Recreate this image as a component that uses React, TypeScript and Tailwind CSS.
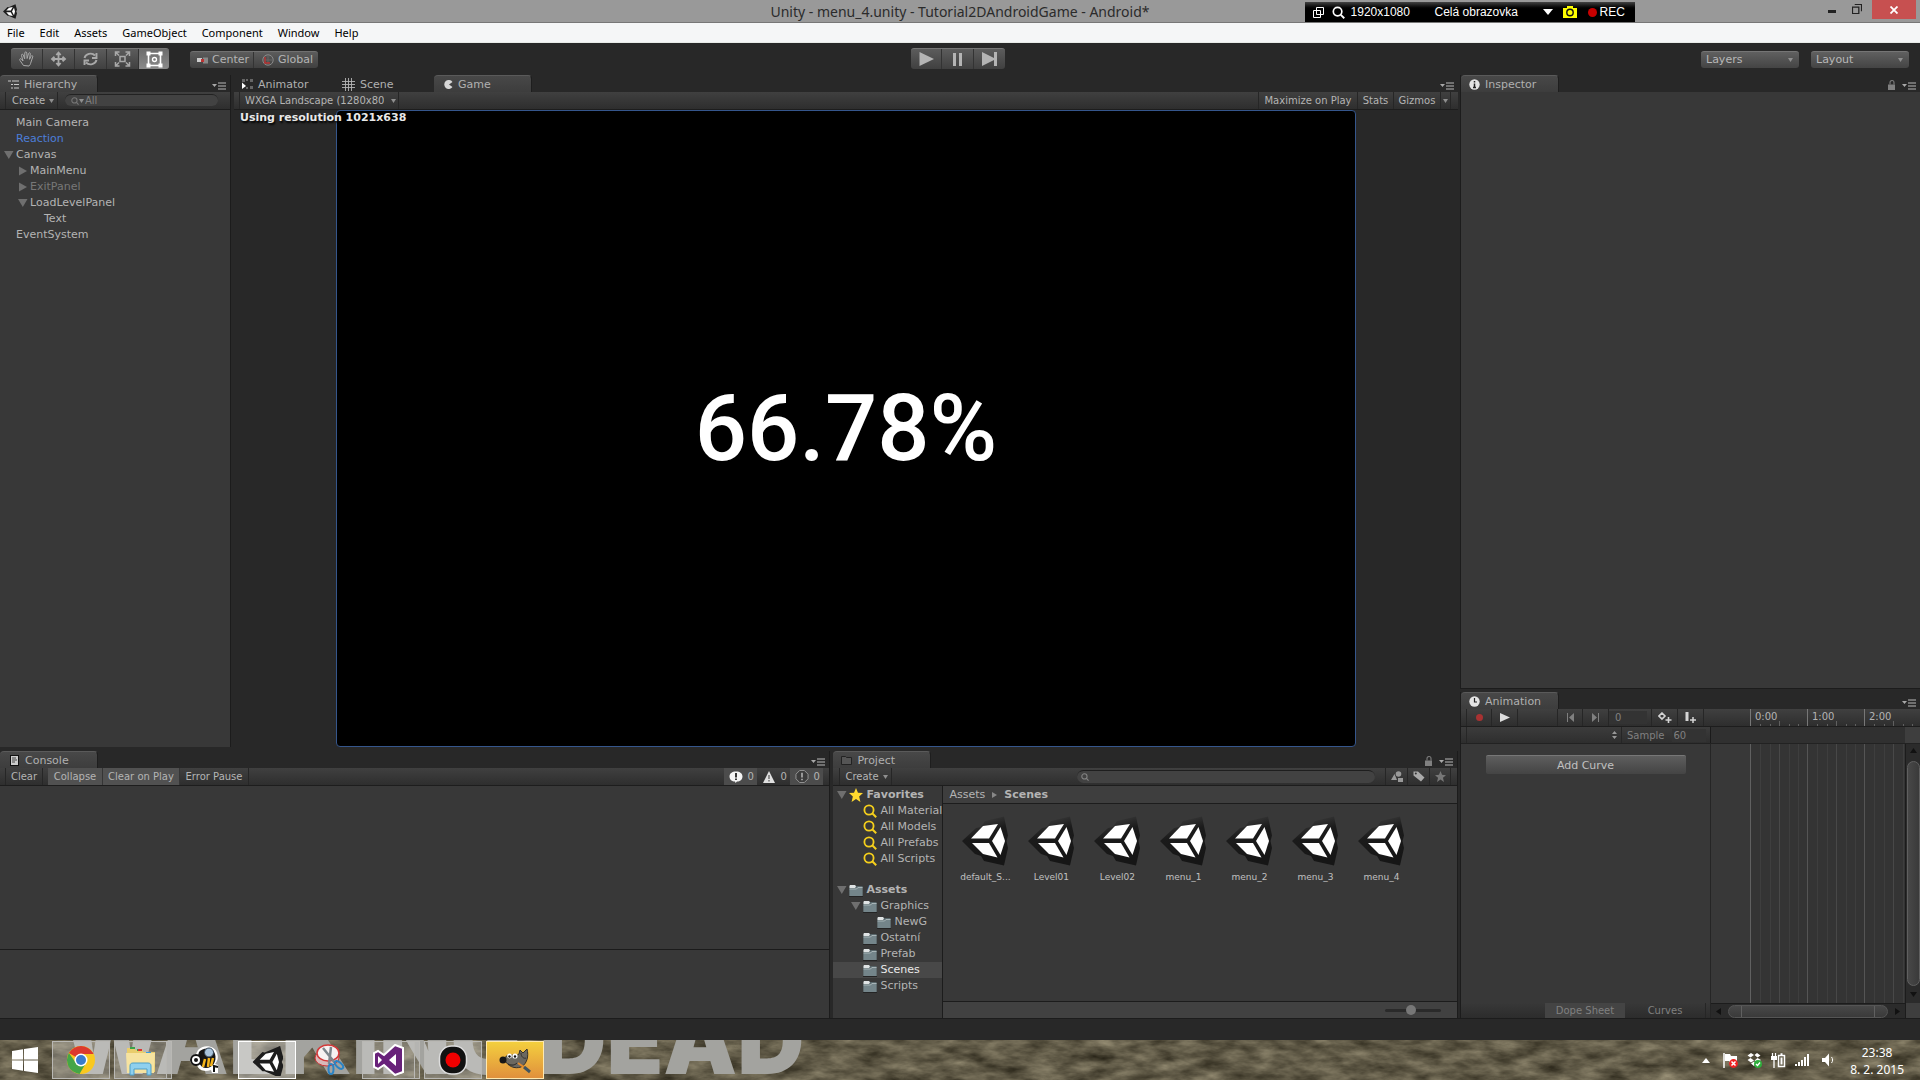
/**
 * Unity editor workspace — menu bar, tool bar, docked panels and the desktop taskbar.
 */

import type { ReactNode } from 'react'

const MENUS = ['File', 'Edit', 'Assets', 'GameObject', 'Component', 'Window', 'Help']

interface TreeItem {
  label: string
  indent: string
  arrow?: 'open' | 'closed'
  tone?: string
}

const HIERARCHY: TreeItem[] = [
  { label: 'Main Camera', indent: 'pl-1' },
  { label: 'Reaction', indent: 'pl-1', tone: 'text-[#4c7ed9]' },
  { label: 'Canvas', indent: 'pl-1', arrow: 'open' },
  { label: 'MainMenu', indent: 'pl-[18px]', arrow: 'closed' },
  { label: 'ExitPanel', indent: 'pl-[18px]', arrow: 'closed', tone: 'text-[#777]' },
  { label: 'LoadLevelPanel', indent: 'pl-[18px]', arrow: 'open' },
  { label: 'Text', indent: 'pl-8' },
  { label: 'EventSystem', indent: 'pl-1' },
]

const FAVORITES = ['All Materials', 'All Models', 'All Prefabs', 'All Scripts']

const FOLDERS: TreeItem[] = [
  { label: 'Graphics', indent: 'pl-[18px]', arrow: 'open' },
  { label: 'NewG', indent: 'pl-8' },
  { label: 'Ostatní', indent: 'pl-[18px]' },
  { label: 'Prefab', indent: 'pl-[18px]' },
  { label: 'Scenes', indent: 'pl-[18px]' },
  { label: 'Scripts', indent: 'pl-[18px]' },
]

const SCENES = ['default_S...', 'Level01', 'Level02', 'menu_1', 'menu_2', 'menu_3', 'menu_4']

/* ---------- small icons ---------- */

function Arrow({ state }: { state?: 'open' | 'closed' }) {
  return (
    <svg className="mr-[2px] h-[10px] w-[10px] shrink-0" viewBox="0 0 10 10" fill="#6f6f6f">
      {state === 'open' && <path d="M0 1h9.500L4.800 9z" />}
      {state === 'closed' && <path d="M1 0.500v9L9 5z" />}
    </svg>
  )
}

function Caret({ className = '' }: { className?: string }) {
  return (
    <svg className={`h-[4px] w-[5px] shrink-0 ${className}`} viewBox="0 0 5 4" fill="#8f8f8f">
      <path d="M0 0h5L2.500 4z" />
    </svg>
  )
}

function PaneMenu() {
  return (
    <button aria-label="Panel menu" className="mb-[1px] flex h-[10px] items-center">
      <svg className="h-[8px] w-[14px]" viewBox="0 0 14 8">
        <path d="M0 2h5L2.500 5z" fill="#a8a8a8" />
        <path d="M6 1h8M6 4h8M6 7h8" stroke="#b8b8b8" strokeWidth="1.200" />
      </svg>
    </button>
  )
}

function Lock() {
  return (
    <button aria-label="Lock panel" className="mb-[2px]">
      <svg className="h-[10px] w-[9px]" viewBox="0 0 9 10">
        <path d="M3 4.500V2.500a2 2 0 0 1 4 0v2" fill="none" stroke="#777" strokeWidth="1.200" />
        <path d="M1 4.500h7V10H1z" fill="#808080" />
      </svg>
    </button>
  )
}

function Magnifier({ className }: { className: string }) {
  return (
    <svg className={className} viewBox="0 0 14 14" fill="none" stroke="currentColor">
      <circle cx="6" cy="6" r="4.600" strokeWidth="1.800" />
      <path d="M9.500 9.500L13.200 13.200" strokeWidth="2" />
    </svg>
  )
}

function Folder() {
  return (
    <svg className="h-[13px] w-[14px] shrink-0" viewBox="0 0 14 13">
      <path d="M0.500 12V2L1.500 1H6l1 1h6.500v10z" fill="#58666a" />
      <path d="M1 1h5l1 1.500L6 4H0.500V2z" fill="#dfe3e4" />
      <path d="M0.500 4.500H7l1.500-1.500h5V12h-13z" fill="#74858a" />
      <path d="M0.500 5H7.500L9 3.500h4.500" fill="none" stroke="#b5c0c3" strokeWidth="0.800" />
      <path d="M0 12.500h14" stroke="#242424" />
    </svg>
  )
}

function SceneIcon({ className }: { className: string }) {
  return (
    <svg className={className} viewBox="0 0 47 50">
      <defs>
        <linearGradient id="sceneShell" x1="0" y1="0" x2="0.300" y2="1">
          <stop offset="0" stopColor="#4a4a4a" />
          <stop offset="0.450" stopColor="#1b1b1b" />
          <stop offset="1" stopColor="#161616" />
        </linearGradient>
      </defs>
      <path d="M0 25L14 12l5 -1 4 -6L42 0.500l4 19 -1.500 5.500 1.500 7 -4 17.500L22 45l-3 -5 -6 -2z" fill="url(#sceneShell)" />
      <path d="M9 22.500L21 10l15 -2 -9 14.500z" fill="#fff" />
      <path d="M10 27h17l8.500 14.500L21 38z" fill="#fff" />
      <path d="M38.500 11L43 25l-4.500 14L30 25z" fill="#fff" />
    </svg>
  )
}

function UnityMark({ className }: { className: string }) {
  return (
    <svg className={className} viewBox="0 0 28 29">
      <path d="M0 14.500L9 5.500 11 6 25 0l3 11 -1.500 3.500L28 18l-3 11 -14 -6H9z" fill="#1d1d1d" />
      <path d="M6.500 12.500L12 7l7.500 -1.500 -4 7zM6.500 16h9l4 7.500L12 22zM22 7l2 7.500 -2 7.500 -4 -7.500z" fill="#fff" />
    </svg>
  )
}

/* ---------- panel pieces ---------- */

function Tab({ icon, children, active = true }: { icon: ReactNode; children: ReactNode; active?: boolean }) {
  const look = active
    ? 'w-[98px] rounded-t-[4px] border-t border-r border-[#5a5a5a] border-r-[#1e1e1e] bg-linear-to-b from-[#484848] to-[#3d3d3d]'
    : 'w-[100px] pt-px'
  return (
    <button role="tab" aria-selected={active} className={`flex h-[17px] shrink-0 items-center gap-[5px] pl-2 text-[11px] leading-[16px] text-[#b0b0b0] ${look}`}>
      {icon}
      <span className="pt-px whitespace-nowrap">{children}</span>
    </button>
  )
}

function TabBar({ children, lock = false }: { children: ReactNode; lock?: boolean }) {
  return (
    <div className="flex h-[17px] shrink-0 items-end">
      {children}
      <div className="ml-auto flex items-end gap-[6px] pr-1">
        {lock && <Lock />}
        <PaneMenu />
      </div>
    </div>
  )
}

function Strip({ children }: { children: ReactNode }) {
  return (
    <div className="flex h-[18px] shrink-0 items-stretch border-b border-[#1d1d1d] bg-linear-to-b from-[#404040] to-[#2e2e2e] text-[10px] text-[#b4b4b4]">
      {children}
    </div>
  )
}

function DropDown({ label, options }: { label: string; options: string[] }) {
  return (
    <span className="relative flex w-[98px]">
      <select
        aria-label={label}
        className="h-[17px] w-full appearance-none rounded-[3px] border-t border-[#757575] bg-linear-to-b from-[#606060] to-[#444] pl-[5px] text-[11px] leading-[14px] text-[#b8b8b8]"
      >
        {options.map((o) => (
          <option key={o}>{o}</option>
        ))}
      </select>
      <Caret className="pointer-events-none absolute top-[7px] right-[6px]" />
    </span>
  )
}

/* ---------- top of the window ---------- */

function TitleBar() {
  return (
    <header className="grid h-[23px] shrink-0 grid-cols-[1fr_auto_1fr] border-b border-[#777] bg-[#999] font-['Noto_Sans',sans-serif]">
      <div className="flex items-center pl-[3px]">
        <UnityMark className="h-[15px] w-[14px]" />
      </div>
      <h1 className="text-[14px] leading-[23px] text-[#2b2b2b]">Unity - menu_4.unity - Tutorial2DAndroidGame - Android*</h1>
      <div className="flex items-start justify-end gap-[10px] pr-1">
        <div className="mt-[2px] mr-auto ml-[155px] flex h-5 w-[330px] items-center bg-linear-to-b from-[#444] to-black to-40% pl-2 font-['Liberation_Sans',sans-serif] text-[12px] text-white">
          <svg className="h-[11px] w-[11px]" viewBox="0 0 11 11" fill="none" stroke="#fff">
            <path d="M3.500 0.500h7v7h-7zM0.500 3.500h7v7h-7z" />
          </svg>
          <Magnifier className="ml-2 h-[13px] w-[13px]" />
          <span className="ml-[6px] w-[84px]">1920x1080</span>
          <span className="w-[108px]">Celá obrazovka</span>
          <svg className="h-[6px] w-[10px]" viewBox="0 0 10 6" fill="#fff">
            <path d="M0 0h10L5 6z" />
          </svg>
          <svg className="ml-[10px] h-[12px] w-[14px]" viewBox="0 0 14 12">
            <path d="M0 2h4V0h6v2h4v10H0z" fill="#ff0" />
            <circle cx="7" cy="6.500" r="3.200" fill="none" stroke="#111" strokeWidth="1.400" />
          </svg>
          <span className="ml-[11px] h-[9px] w-[9px] rounded-full bg-[#c80000]" />
          <span className="ml-[3px]">REC</span>
        </div>
        <button aria-label="Minimize" className="mt-[10px] mr-[6px] h-[3px] w-[8px] bg-[#222]" />
        <button aria-label="Restore" className="mt-[4px]">
          <svg className="h-[10px] w-[10px]" viewBox="0 0 11 11" fill="none" stroke="#222">
            <path d="M0.500 3.500h7v7h-7zM3 0.500h7.500V8" strokeWidth="1.400" />
          </svg>
        </button>
        <button aria-label="Close" className="flex h-[19px] w-[44px] items-center justify-center bg-[#c75050]">
          <svg className="h-[8px] w-[8px]" viewBox="0 0 8 8" stroke="#fff" strokeWidth="1.800">
            <path d="M0.500 0.500l7 7M7.500 0.500l-7 7" />
          </svg>
        </button>
      </div>
    </header>
  )
}

function MenuBar() {
  return (
    <nav className="flex h-5 shrink-0 items-center gap-[15px] border-b border-[#e8ebe8] bg-[#f5f6f7] pt-px pl-[7px] font-['Noto_Sans',sans-serif] text-[11px] text-black">
      {MENUS.map((m) => (
        <button key={m}>{m}</button>
      ))}
    </nav>
  )
}

const TOOLS: { label: string; art: ReactNode }[] = [
  {
    label: 'Hand',
    art: <path d="M5 14.500L1.500 9.500C0.500 8 2 7 3 8.200L4.500 10 3 4.500C2.700 3 4.300 2.600 4.800 4l1.400 3.800L6.300 2c0-1.500 1.900-1.500 2 0l0.300 5.500L10 2.600c0.400-1.400 2-1 1.800 0.400L11 8.300l1.500-3c0.700-1.300 2.200-0.600 1.700 0.700L12.500 11c-0.500 2-1 3-2 4z" strokeWidth="1" />,
  },
  {
    label: 'Move',
    art: <path d="M8 2v12M2 8h12M5.800 4L8 1.500 10.200 4M5.800 12L8 14.500 10.200 12M4 5.800L1.500 8 4 10.200M12 5.800L14.500 8 12 10.200" strokeWidth="1.800" />,
  },
  {
    label: 'Rotate',
    art: <path d="M2 7C3 3 9 1 12.500 4.500M14 2v5H9.500M14 9c-1 4-7 6-10.500 2.500M2 14V9.500h4.500" strokeWidth="1.900" />,
  },
  {
    label: 'Scale',
    art: <path d="M5.500 5.500h5v5h-5zM1 5V1h4M11 1h4v4M15 11v4h-4M5 15H1v-4M1 1l3.500 3.500M15 1l-3.500 3.500M15 15l-3.500-3.500M1 15l3.500-3.500" strokeWidth="1.500" />,
  },
]

function ToolBar() {
  return (
    <div className="grid h-8 shrink-0 grid-cols-[1fr_auto_1fr] items-start px-[11px] pt-[5px] text-[#b4b4b4]">
      <div className="flex items-center">
        <div className="flex h-[21px] rounded-[3px] border-t border-[#777] bg-linear-to-b from-[#5c5c5c] to-[#404040]">
          {TOOLS.map((t) => (
            <button key={t.label} aria-label={t.label} className="flex w-8 items-center justify-center border-r border-[#333]">
              <svg className="h-4 w-[17px]" viewBox="0 0 16 16" fill="none" stroke="#a9a9a9">
                {t.art}
              </svg>
            </button>
          ))}
          <button aria-label="Rect" aria-pressed="true" className="flex w-[30px] items-center justify-center rounded-r-[3px] bg-linear-to-b from-[#6c6c6c] to-[#8a8a8a]">
            <svg className="h-[17px] w-[17px]" viewBox="0 0 17 17" fill="none" stroke="#fff">
              <path d="M2.500 2.500h12v12h-12z" strokeWidth="1.600" />
              <circle cx="8.500" cy="8.500" r="2" strokeWidth="1.400" />
              <path d="M0.500 2.500h4M12.500 2.500h4M0.500 14.500h4M12.500 14.500h4" strokeWidth="4" />
            </svg>
          </button>
        </div>
        <div className="mt-[2px] ml-[21px] flex h-[17px] rounded-[3px] border-t border-[#707070] bg-linear-to-b from-[#5c5c5c] to-[#404040] text-[11px] leading-[16px]">
          <button className="flex w-16 items-center gap-1 border-r border-[#333] pl-[7px]">
            <svg className="h-[7px] w-[11px] shrink-0" viewBox="0 0 11 7">
              <path d="M0 1h5v4H0z" fill="#ccc" />
              <path d="M6 0.500h5v6H6z" fill="#888" />
              <path d="M4 2h3v3H4z" fill="#b33" />
            </svg>
            Center
          </button>
          <button className="flex w-16 items-center gap-1 pl-2">
            <svg className="h-[12px] w-[12px] shrink-0" viewBox="0 0 12 12" fill="none">
              <circle cx="6" cy="6" r="5.200" stroke="#8a8a8a" />
              <path d="M6 1v10M1 6h10" stroke="#666" />
              <path d="M3 3v6h5" stroke="#b33" strokeWidth="1.400" />
            </svg>
            Global
          </button>
        </div>
      </div>
      <div className="mr-1 flex h-[21px] rounded-[3px] border-t border-[#777] bg-linear-to-b from-[#5c5c5c] to-[#404040]">
        <button aria-label="Play" className="flex w-[31px] items-center justify-center border-r border-[#333]">
          <svg className="h-[14px] w-[15px]" viewBox="0 0 15 14" fill="#b4b4b4"><path d="M0.500 0v14L15 7z" /></svg>
        </button>
        <button aria-label="Pause" className="flex w-8 items-center justify-center border-r border-[#333]">
          <svg className="h-[13px] w-[9px]" viewBox="0 0 9 13" fill="#b4b4b4"><path d="M0 0h3v13H0zM6 0h3v13H6z" /></svg>
        </button>
        <button aria-label="Step" className="flex w-[31px] items-center justify-center">
          <svg className="h-[14px] w-[15px]" viewBox="0 0 15 14" fill="#b4b4b4"><path d="M0 0l12 6V0h3v14h-3V8L0 14z" /></svg>
        </button>
      </div>
      <div className="mt-[3px] flex justify-end gap-3">
        <DropDown label="Layers" options={['Layers']} />
        <DropDown label="Layout" options={['Layout']} />
      </div>
    </div>
  )
}

/* ---------- docked panels ---------- */

function HierarchyPanel() {
  return (
    <section className="flex w-[231px] shrink-0 flex-col border-r border-[#1c1c1c]">
      <TabBar>
        <Tab icon={
          <svg className="h-[9px] w-[11px]" viewBox="0 0 11 9" stroke="#c8c8c8"><path d="M0 1h3M4 1h7M3 4.500h2M6 4.500h5M3 8h2M6 8h5" /></svg>
        }>Hierarchy</Tab>
      </TabBar>
      <Strip>
        <button className="ml-[5px] flex w-[53px] items-center justify-between border-x border-[#262626] pr-[3px] pl-[6px]">
          Create <Caret />
        </button>
        <label className="mt-[2px] ml-[7px] flex h-[12px] w-[153px] items-center rounded-full border-t border-[#222] bg-[#424242] pl-[6px] text-[#777]">
          <Magnifier className="h-[8px] w-[8px]" />
          <Caret />
          <input aria-label="Search hierarchy" placeholder="All" className="min-w-0 flex-1 bg-transparent pl-[1px] text-[10px] leading-[12px] outline-none placeholder:text-[#808080]" />
        </label>
      </Strip>
      <ul role="tree" className="flex-1 bg-[#383838] pt-[5px] text-[11px]">
        {HIERARCHY.map((item) => (
          <li key={item.label} role="treeitem" className={`flex h-4 items-center ${item.indent} ${item.tone ?? 'text-[#b4b4b4]'}`}>
            <Arrow state={item.arrow} />
            {item.label}
          </li>
        ))}
      </ul>
    </section>
  )
}

function GamePanel() {
  return (
    <section className="flex min-w-0 flex-1 flex-col">
      <TabBar>
        <Tab active={false} icon={
          <svg className="h-[10px] w-[11px]" viewBox="0 0 11 10">
            <path d="M0 0h3v3H0zM4 0h2v2H4zM8 0h3v3H8zM8 7h3v3H8zM4 8h2v2H4z" fill="#666" />
            <path d="M0 3.500v6.500L4 7z" fill="#fff" />
          </svg>
        }>Animator</Tab>
        <Tab active={false} icon={
          <svg className="h-[13px] w-[13px]" viewBox="0 0 13 13" stroke="#b4b4b4"><path d="M3.500 0v13M6.500 0v13M9.500 0v13M0 3.500h13M0 6.500h13M0 9.500h13" strokeWidth="0.900" /></svg>
        }>Scene</Tab>
        <Tab icon={
          <svg className="ml-[2px] h-[9px] w-[9px]" viewBox="0 0 9 9"><path d="M8.500 2A4.500 4.500 0 1 0 8.500 7L5 4.500z" fill="#d8d8d8" /></svg>
        }>Game</Tab>
      </TabBar>
      <Strip>
        <span className="relative ml-[5px] flex w-[160px] border-x border-[#262626]">
          <select aria-label="Aspect" className="w-full appearance-none overflow-hidden bg-transparent pr-[14px] pl-[5px] text-[10px] leading-4">
            <option>WXGA Landscape (1280x800)</option>
          </select>
          <Caret className="pointer-events-none absolute top-[7px] right-[2px]" />
        </span>
        <div className="mr-[7px] ml-auto flex">
          <button className="w-[99px] border-l border-[#262626]">Maximize on Play</button>
          <button className="w-[36px] border-l border-[#262626]">Stats</button>
          <button className="w-[47px] border-l border-[#262626]">Gizmos</button>
          <button aria-label="Gizmo options" className="flex w-[11px] items-center justify-center border-x border-[#262626]"><Caret /></button>
        </div>
      </Strip>
      <div className="relative flex min-h-0 flex-1 justify-center bg-[#282828]">
        <div className="flex aspect-[1021/638] h-full items-center justify-center rounded-[4px] border border-[#35568c] bg-black">
          <p className="font-['Roboto',sans-serif] text-[92px] leading-none font-medium text-white">66.78%</p>
        </div>
        <p className="absolute top-0 left-[6px] text-[11px] leading-4 font-bold text-[#e8e8e8] text-shadow-[1px_2px_2px_#000]">Using resolution 1021x638</p>
      </div>
    </section>
  )
}

function ConsolePanel() {
  return (
    <section className="flex min-w-0 flex-[830] flex-col border-r border-[#1c1c1c]">
      <TabBar>
        <Tab icon={
          <svg className="mr-px ml-[2px] h-[11px] w-[9px]" viewBox="0 0 9 11">
            <path d="M0 0h9v11H0z" fill="#111" />
            <path d="M1 1h7v9H1z" fill="#ccc" />
            <path d="M2 3h4M2 5h5M2 7h3" stroke="#444" />
          </svg>
        }>Console</Tab>
      </TabBar>
      <Strip>
        <button className="ml-[5px] w-[38px] border-x border-[#262626]">Clear</button>
        <button aria-pressed="true" className="ml-[5px] w-[54px] bg-[#515151]">Collapse</button>
        <button aria-pressed="true" className="w-[78px] border-x border-[#353535] bg-[#515151]">Clear on Play</button>
        <button className="w-[69px] border-r border-[#262626]">Error Pause</button>
        <div className="mr-[6px] ml-auto flex">
          <button aria-label="Messages" className="flex w-[33px] items-center gap-1 bg-[#4c4c4c] pl-[5px]">
            <svg className="h-[12px] w-[14px]" viewBox="0 0 14 12">
              <path d="M7 0.500c4 0 6.500 2 6.500 5S11 10.500 8 10.500L6.500 12 6 10.500C3 10.500 0.500 8.500 0.500 5.500S3 0.500 7 0.500z" fill="#f4f4f4" />
              <path d="M7 2v4.500M7 7.500v1.500" stroke="#222" strokeWidth="1.800" />
            </svg>
            0
          </button>
          <button aria-label="Warnings" className="flex w-[33px] items-center gap-[5px] pl-[6px]">
            <svg className="h-[12px] w-[12px]" viewBox="0 0 12 12">
              <path d="M6 0l6 12H0z" fill="#e0e0e0" />
              <path d="M6 4v4M6 9v1.500" stroke="#555" strokeWidth="1.200" />
            </svg>
            0
          </button>
          <button aria-label="Errors" className="flex w-[33px] items-center gap-1 bg-[#4c4c4c] pl-[5px]">
            <svg className="h-[13px] w-[14px]" viewBox="0 0 14 14">
              <path d="M4.500 0.500h5l4 4v5l-4 4h-5l-4-4v-5z" fill="#3c3c3c" stroke="#999" />
              <path d="M7 3v5M7 9.500V11" stroke="#b8b8b8" strokeWidth="1.600" />
            </svg>
            0
          </button>
        </div>
      </Strip>
      <div className="min-h-0 flex-1 border-b border-[#1b1b1b] bg-[#383838]" />
      <div className="h-[68px] shrink-0 bg-[#383838]" />
    </section>
  )
}

function ProjectPanel() {
  return (
    <section className="flex min-w-0 flex-[624] flex-col border-r border-[#1c1c1c]">
      <TabBar lock>
        <Tab icon={
          <svg className="h-[10px] w-[11px]" viewBox="0 0 11 10" fill="#555" stroke="#222"><path d="M0.500 9.500v-8h4l1 1h5v7z" /></svg>
        }>Project</Tab>
      </TabBar>
      <Strip>
        <button className="ml-[6px] flex w-[53px] items-center justify-between border-x border-[#262626] pr-[3px] pl-[5px]">
          Create <Caret />
        </button>
        <label className="mt-[2px] mr-[10px] ml-auto flex h-[13px] w-[298px] items-center rounded-full border-t border-[#1e1e1e] bg-[#424242] pl-[4px] text-[#858585]">
          <Magnifier className="h-[8px] w-[8px]" />
          <input aria-label="Search project" className="min-w-0 flex-1 bg-transparent pl-1 text-[10px] outline-none" />
        </label>
        <div className="mr-[6px] flex">
          <button aria-label="Search by type" className="flex w-[22px] items-center justify-center border-l border-[#262626]">
            <svg className="h-[11px] w-[12px]" viewBox="0 0 12 11" fill="#999"><path d="M3.500 3L0 9h6zM7 7h5v4H7z" /><circle cx="7.500" cy="3" r="2.800" /></svg>
          </button>
          <button aria-label="Search by label" className="flex w-[22px] items-center justify-center border-l border-[#262626]">
            <svg className="h-[11px] w-[12px]" viewBox="0 0 12 11"><path d="M0.500 0.500H5l6.500 6L8 10.500 0.500 4.500z" fill="#aaa" /><circle cx="2.800" cy="2.500" r="1" fill="#333" /></svg>
          </button>
          <button aria-label="Save search" className="flex w-[22px] items-center justify-center border-x border-[#262626]">
            <svg className="h-[11px] w-[11px]" viewBox="0 0 12 12" fill="#777"><path d="M6 0l1.700 4.200 4.300 0.300-3.300 2.800L9.800 12 6 9.400 2.200 12l1.100-4.700L0 4.500l4.300-0.300z" /></svg>
          </button>
        </div>
      </Strip>
      <div className="flex min-h-0 flex-1 bg-[#383838]">
        <div role="tree" className="w-[110px] shrink-0 overflow-hidden border-r border-[#1c1c1c] pt-px text-[11px] whitespace-nowrap text-[#b4b4b4]">
          <div role="treeitem" className="flex h-4 items-center pl-1 font-bold">
            <Arrow state="open" />
            <svg className="mr-[3px] h-[14px] w-[14px] shrink-0" viewBox="0 0 12 12" fill="#ffd92e"><path d="M6 0l1.700 4 4.300 0.300-3.300 2.900L9.800 12 6 9.400 2.200 12l1.100-4.800L0 4.300 4.300 4z" /></svg>
            Favorites
          </div>
          {FAVORITES.map((f) => (
            <div key={f} role="treeitem" className="flex h-4 items-center gap-[3px] pl-[30px]">
              <Magnifier className="h-[14px] w-[14px] shrink-0 text-[#f5cf1c]" />
              {f}
            </div>
          ))}
          <div role="treeitem" className="mt-[15px] flex h-4 items-center pl-1 font-bold">
            <Arrow state="open" />
            <Folder />
            <span className="ml-[3px]">Assets</span>
          </div>
          {FOLDERS.map((f) => (
            <div key={f.label} role="treeitem" className={`flex h-4 items-center ${f.indent} ${f.label === 'Scenes' ? 'bg-[#484848] text-[#e8e8e8]' : ''}`}>
              <Arrow state={f.arrow} />
              <Folder />
              <span className="ml-[3px]">{f.label}</span>
            </div>
          ))}
        </div>
        <div className="flex min-w-0 flex-1 flex-col">
          <div className="flex h-[18px] shrink-0 items-center gap-[7px] border-b border-[#1c1c1c] bg-[#3e3e3e] pt-px pl-[6px] text-[11px] text-[#b4b4b4]">
            <a href="#assets">Assets</a>
            <svg className="h-[6px] w-[5px]" viewBox="0 0 5 6" fill="#888"><path d="M0 0v6l5-3z" /></svg>
            <a href="#scenes" className="font-bold">Scenes</a>
          </div>
          <ul className="flex flex-1 flex-wrap content-start pt-3 pl-[9px]">
            {SCENES.map((s) => (
              <li key={s} className="flex w-[66px] flex-col items-center">
                <SceneIcon className="h-[50px] w-[47px]" />
                <span className="mt-1 text-[9px] leading-[14px] text-[#c0c0c0]">{s}</span>
              </li>
            ))}
          </ul>
          <div className="flex h-[17px] shrink-0 items-center justify-end border-t border-[#1c1c1c] bg-[#414141] pr-4">
            <input
              type="range"
              aria-label="Icon size"
              defaultValue="46"
              className="h-[3px] w-[56px] appearance-none rounded-full bg-[#2a2a2a] [&::-webkit-slider-thumb]:h-[10px] [&::-webkit-slider-thumb]:w-[10px] [&::-webkit-slider-thumb]:appearance-none [&::-webkit-slider-thumb]:rounded-full [&::-webkit-slider-thumb]:bg-[#777]"
            />
          </div>
        </div>
      </div>
    </section>
  )
}

function InspectorPanel() {
  return (
    <section className="flex min-h-0 flex-1 flex-col border-l border-[#1c1c1c]">
      <TabBar lock>
        <Tab icon={
          <svg className="h-[11px] w-[11px]" viewBox="0 0 11 11"><circle cx="5.500" cy="5.500" r="5.200" fill="#e4e4e4" /><path d="M5.500 2v1.500M5.500 4.500v4M4 8.500h3" stroke="#222" strokeWidth="1.500" /></svg>
        }>Inspector</Tab>
      </TabBar>
      <div className="flex-1 border-b border-[#1c1c1c] bg-[#383838]" />
    </section>
  )
}

function Ruler() {
  return (
    <div className="flex min-w-0 flex-1 overflow-hidden pl-[45px]">
      {['0:00', '1:00', '2:00'].map((t) => (
        <div key={t} className="relative w-[57px] shrink-0 border-l border-[#777] pl-1 text-[10px] leading-[16px]">
          {t}
          <svg className="absolute bottom-0 left-0 h-[6px] w-[57px]" viewBox="0 0 57 6" stroke="#606060">
            <path d="M9.500 4v2M19.500 4v2M28.500 1v5M38.500 4v2M47.500 4v2" />
          </svg>
        </div>
      ))}
    </div>
  )
}

function AnimationPanel() {
  return (
    <section className="flex h-[326px] shrink-0 flex-col border-l border-[#1c1c1c]">
      <TabBar>
        <Tab icon={
          <svg className="h-[11px] w-[11px]" viewBox="0 0 11 11"><circle cx="5.500" cy="5.500" r="5.200" fill="#e4e4e4" /><path d="M5.500 2v4H8" fill="none" stroke="#222" strokeWidth="1.200" /></svg>
        }>Animation</Tab>
      </TabBar>
      <Strip>
        <div className="flex w-[244px] shrink-0 pl-[5px]">
          <button aria-label="Record" className="flex w-[26px] items-center justify-center border-x border-[#262626]">
            <span className="h-[7px] w-[7px] rounded-full bg-[#a83232]" />
          </button>
          <button aria-label="Play animation" className="flex w-[26px] items-center justify-center border-r border-[#262626]">
            <svg className="h-[9px] w-[10px]" viewBox="0 0 10 9" fill="#ddd"><path d="M0 0v9l10-4.500z" /></svg>
          </button>
          <button aria-label="Previous keyframe" className="ml-[39px] flex w-[26px] items-center justify-center border-x border-[#262626]">
            <svg className="h-[9px] w-[7px]" viewBox="0 0 7 9" fill="#808080"><path d="M0 0h1v9H0zM7 0v9L2 4.500z" /></svg>
          </button>
          <button aria-label="Next keyframe" className="flex w-[26px] items-center justify-center border-r border-[#262626]">
            <svg className="h-[9px] w-[7px]" viewBox="0 0 7 9" fill="#808080"><path d="M6 0h1v9H6zM0 0v9l5-4.500z" /></svg>
          </button>
          <input aria-label="Frame" defaultValue="0" className="my-[2px] w-[38px] bg-[#333] pl-[6px] text-[10px] text-[#808080]" />
          <button aria-label="Add keyframe" className="ml-1 flex w-[27px] items-center justify-center border-x border-[#262626]">
            <svg className="h-[11px] w-[14px]" viewBox="0 0 14 11" fill="none" stroke="#d4d4d4" strokeWidth="1.600"><path d="M4 1l3 3-3 3-3-3zM10.500 5v6M7.500 8h6" /></svg>
          </button>
          <button aria-label="Add event" className="flex w-[26px] items-center justify-center border-r border-[#262626]">
            <svg className="h-[11px] w-[11px]" viewBox="0 0 11 11" fill="none" stroke="#d4d4d4"><path d="M2 0v9" strokeWidth="3" /><path d="M8 5v6M5 8h6" strokeWidth="1.500" /></svg>
          </button>
        </div>
        <Ruler />
      </Strip>
      <div className="flex h-[17px] shrink-0 border-b border-[#222] bg-[#303030]">
        <div className="flex w-[250px] items-center border-r border-[#1a1a1a] bg-linear-to-b from-[#3c3c3c] to-[#2e2e2e] text-[10px] text-[#808080]">
          <button aria-label="Clip" className="ml-[5px] flex h-full w-[156px] items-center justify-end border-x border-[#262626] pr-1">
            <svg className="h-[8px] w-[5px]" viewBox="0 0 5 8" fill="#999"><path d="M0 3h5L2.500 0zM0 5h5L2.500 8z" /></svg>
          </button>
          <label className="flex items-center gap-[7px] pl-[5px]">
            Sample
            <input defaultValue="60" className="h-[13px] w-[34px] bg-[#333] pl-[2px] text-[10px]" />
          </label>
        </div>
        <div className="ml-auto w-[15px] bg-[#3e3e3e]" />
      </div>
      <div className="flex min-h-0 flex-1 bg-[#383838]">
        <div className="flex w-[250px] shrink-0 flex-col border-r border-[#252525]">
          <div className="flex flex-1 items-start justify-center pt-[11px]">
            <button className="h-[19px] w-[200px] rounded-[2px] border-t border-[#777] bg-linear-to-b from-[#5e5e5e] to-[#444] text-[11px] leading-[17px] text-[#c0c0c0]">Add Curve</button>
          </div>
          <div className="flex h-[15px] justify-end bg-linear-to-b from-[#383838] to-[#2c2c2c] pr-1 text-[10px] leading-[15px] text-[#808080]">
            <button aria-pressed="true" className="w-[80px] bg-[#444]">Dope Sheet</button>
            <button className="w-[81px] border-r border-[#262626]">Curves</button>
          </div>
        </div>
        <div className="flex min-w-0 flex-1 flex-col">
          <div className="flex-1 pl-[39px]">
            <div className="h-full border-l border-[#606060] bg-[#343434]">
              <svg className="h-full w-full">
                <defs>
                  <pattern id="beats" width="57" height="10" patternUnits="userSpaceOnUse">
                    <path d="M9.500 0v10M19.500 0v10M38.500 0v10M47.500 0v10" stroke="#3e3e3e" />
                    <path d="M28.500 0v10" stroke="#484848" />
                    <path d="M56.500 0v10" stroke="#555" />
                  </pattern>
                </defs>
                <rect width="100%" height="100%" fill="url(#beats)" />
              </svg>
            </div>
          </div>
          <div className="flex h-[15px] items-center justify-between border-t border-[#1c1c1c] bg-[#2b2b2b] px-[5px]">
            <svg className="h-[7px] w-[5px]" viewBox="0 0 5 7" fill="#111"><path d="M5 0v7L0 3.500z" /></svg>
            <div className="mx-[7px] h-[13px] flex-1 rounded-full border border-[#555] bg-linear-to-b from-[#484848] to-[#3a3a3a] px-[12px]">
              <div className="h-full border-x border-[#606060]" />
            </div>
            <svg className="h-[7px] w-[5px]" viewBox="0 0 5 7" fill="#111"><path d="M0 0v7l5-3.500z" /></svg>
          </div>
        </div>
        <div className="flex w-[15px] shrink-0 flex-col items-center border-l border-[#1c1c1c] bg-[#2b2b2b] pt-1">
          <svg className="h-[5px] w-[7px]" viewBox="0 0 7 5" fill="#111"><path d="M0 5h7L3.500 0z" /></svg>
          <div className="mt-[8px] w-[13px] flex-1 rounded-full border border-[#606060] bg-linear-to-r from-[#484848] to-[#3a3a3a]" />
          <svg className="my-[6px] h-[5px] w-[7px]" viewBox="0 0 7 5" fill="#111"><path d="M0 0h7L3.500 5z" /></svg>
          <div className="h-[15px] w-full bg-[#3e3e3e]" />
        </div>
      </div>
    </section>
  )
}

/* ---------- taskbar ---------- */

const APPS: { label: string; frame: string; stacked?: boolean; art: ReactNode }[] = [
  {
    label: 'Chrome',
    frame: 'border border-[#b9b8b4] bg-[#ffffff40]',
    art: (
      <>
        <circle cx="16" cy="16" r="14" fill="#f9c81e" />
        <path d="M16 16L3.900 9A14 14 0 0 1 28.100 9L28.500 10H16z" fill="#dc3a2d" />
        <path d="M3.900 9A14 14 0 0 0 14.500 30L21 19l-5-3-5 3z" fill="#45a547" />
        <circle cx="16" cy="16" r="6.500" fill="#fff" />
        <circle cx="16" cy="16" r="5" fill="#3a7ccc" />
      </>
    ),
  },
  {
    label: 'File Explorer',
    frame: 'border border-[#b9b8b4] bg-[#ffffff40]',
    stacked: true,
    art: (
      <>
        <path d="M2 4h8v2h8v2h12v20H2z" fill="#e9cd6c" />
        <path d="M5 3h5v2H5zM12 5h4v2h-4z" fill="#3aa34a" />
        <path d="M13 5h4v2h-4z" fill="#d33" />
        <path d="M21 8h5v2h-5z" fill="#3b9be0" />
        <path d="M1 9h29l-1 20H2z" fill="#f6e3a0" />
        <path d="M5 31V22c0-2 1-3 3-3h15c2 0 3 1 3 3v9h-4v-6H9v6z" fill="#8fd0ee" stroke="#4d9fc9" />
      </>
    ),
  },
  {
    label: 'Bumblebee',
    frame: '',
    art: (
      <>
        <path d="M9 6C14 0 26 1 28 9c2 5 0 9-2 11l3 1v8h-6l-1-3c-6 2-12 1-14-5-7 1-9-6-5-9 1-1 3-2 4-2z" fill="#fff" />
        <path d="M10 8C14 3 24 3 26 10s-2 14-9 14c-6 0-10-8-7-16z" fill="#151515" />
        <path d="M16 15l-2 8M20 14l-1 9M24 14l-2 8" stroke="#f4b41a" strokeWidth="2.500" />
        <circle cx="20" cy="8.500" r="4.500" fill="#a9c4dc" stroke="#345" />
        <circle cx="7" cy="16" r="5" fill="#fff" stroke="#111" strokeWidth="2" />
        <circle cx="7" cy="16" r="2" fill="#111" />
        <path d="M25 28v-6l4 1" fill="none" stroke="#111" strokeWidth="2" />
      </>
    ),
  },
  { label: 'Unity', frame: 'border border-white bg-[#ffffff66]', art: <UnityMark className="" /> },
  {
    label: 'Snipping Tool',
    frame: '',
    art: (
      <>
        <ellipse cx="14" cy="14" rx="12" ry="8" fill="#d9b9b9" stroke="#c33" />
        <ellipse cx="15" cy="9" rx="11" ry="8" fill="#f6f2f2" stroke="#d33a3a" strokeWidth="1.500" />
        <path d="M10 4l12 15M18 3l-2 17" stroke="#7d868c" strokeWidth="2.500" />
        <ellipse cx="18" cy="25" rx="2.500" ry="5" fill="none" stroke="#2a83c4" strokeWidth="2" />
        <ellipse cx="26" cy="21" rx="2.500" ry="5" transform="rotate(-50 26 21)" fill="none" stroke="#2a83c4" strokeWidth="2" />
      </>
    ),
  },
  {
    label: 'Visual Studio',
    frame: 'border border-[#b9b8b4] bg-[#ffffff40]',
    stacked: true,
    art: (
      <>
        <path d="M22 1l8 3v24l-8 3-11-10-6 4-4-2V9l4-2 6 4z" fill="#68217a" stroke="#fff" strokeWidth="2" />
        <path d="M23 10v12l-7-6zM5 12v8l4-4z" fill="#fff" />
      </>
    ),
  },
  {
    label: 'Recorder',
    frame: 'border border-[#b9b8b4] bg-[#ffffff40]',
    art: (
      <>
        <rect x="2.500" y="2" width="27" height="28" rx="12" fill="#111" stroke="#ddd" strokeWidth="1.500" />
        <circle cx="16" cy="16" r="7.500" fill="#f00000" />
      </>
    ),
  },
  {
    label: 'GIMP',
    frame: 'border border-[#ffe9b0] bg-linear-to-b from-[#f3cf3e] to-[#e0903c]',
    art: (
      <>
        <path d="M5 15c2-3 4-5 7-4 3 0 6 1 8-1l1-4 3 3 4-4c2 7 0 15-6 18-6 2-13 0-17-8z" fill="#6b6860" stroke="#33312c" />
        <path d="M22 9c0 4 3 6 5 5" fill="none" stroke="#33312c" />
        <circle cx="4" cy="16" r="3.500" fill="#151515" />
        <circle cx="10.500" cy="12" r="2.400" fill="#fff" />
        <circle cx="16" cy="12" r="2.600" fill="#fff" />
        <circle cx="10.500" cy="12.500" r="1.200" fill="#111" />
        <circle cx="16" cy="12.500" r="1.200" fill="#111" />
        <path d="M9 20c4 2 7 1 9-1" fill="none" stroke="#222" />
        <path d="M19 19l7 5" stroke="#e48a2c" strokeWidth="2" />
        <path d="M25 23l6 5" stroke="#41545e" strokeWidth="3" />
      </>
    ),
  },
]

function Tray() {
  return (
    <div className="ml-auto flex items-center pr-4 text-white">
      <div className="flex items-center gap-[9px]">
        <button aria-label="Hidden icons" className="mr-1">
          <svg className="h-[5px] w-[8px]" viewBox="0 0 8 5" fill="#fff"><path d="M0 5h8L4 0z" /></svg>
        </button>
        <svg className="h-[15px] w-[15px]" viewBox="0 0 15 15">
          <path d="M1 0v15" stroke="#fff" strokeWidth="1.500" />
          <path d="M2 1h5l1 2h6v6H7L6 8H2z" fill="#fff" />
          <circle cx="10.500" cy="10.500" r="4.400" fill="#e22" />
          <path d="M8.500 8.500l4 4M12.500 8.500l-4 4" stroke="#fff" strokeWidth="1.500" />
        </svg>
        <svg className="h-[15px] w-[15px]" viewBox="0 0 15 15">
          <path d="M4 0l3 2-3.500 2.500L0.500 2.500zM10 0l3.500 2.500-3 2L7.500 2zM3.500 5l3.500 2.500L4 9.500 0.500 7zM10.500 5l3.500 2-3.500 2.500-3-2zM4 10.500l3-2 3 2-3 2.500z" fill="#fff" />
          <circle cx="11" cy="11" r="4" fill="#2fae3c" />
          <path d="M9 11l1.500 1.500L13 9.500" fill="none" stroke="#fff" strokeWidth="1.300" />
        </svg>
        <svg className="h-[15px] w-[15px]" viewBox="0 0 15 15" fill="none" stroke="#fff">
          <path d="M7.500 2.500h6v11h-6zM9.500 1h2" strokeWidth="1.500" />
          <path d="M1.500 0v3M4.500 0v3M3 7v8" strokeWidth="1.300" />
          <path d="M0 3h6v4H0z" fill="#fff" stroke="none" />
          <path d="M9.500 4.500h2v7h-2z" fill="#fff" stroke="none" />
        </svg>
        <svg className="h-[12px] w-[15px]" viewBox="0 0 15 12" fill="#fff">
          <path d="M0 10h2v2H0zM3 8h2v4H3zM6 6h2v6H6zM9 3h2v9H9zM12 0h2v12h-2z" />
        </svg>
        <svg className="ml-[2px] h-[14px] w-[15px]" viewBox="0 0 15 14">
          <path d="M1 5h3l4-4.500v13L4 9H1z" fill="#fff" />
          <path d="M10.500 4c1.500 2 1.500 4 0 6" fill="none" stroke="#fff" />
        </svg>
      </div>
      <time className="ml-[14px] pt-[2px] text-center text-[12px] leading-[17px]">
        23:38
        <br />
        8. 2. 2015
      </time>
    </div>
  )
}

function Taskbar() {
  return (
    <footer className="relative flex h-10 shrink-0 overflow-hidden bg-[#5c5646] font-['Noto_Sans',sans-serif]">
      <svg className="absolute inset-0 h-full w-full" aria-hidden="true">
        <filter id="ground" colorInterpolationFilters="sRGB">
          <feTurbulence type="fractalNoise" baseFrequency="0.035 0.09" numOctaves="4" seed="7" />
          <feColorMatrix values="0.500 0 0 0 0.130  0.480 0 0 0 0.115  0.420 0 0 0 0.070  0 0 0 0 1" />
        </filter>
        <rect width="100%" height="100%" filter="url(#ground)" />
      </svg>
      <p aria-hidden="true" className="absolute bottom-[10px] left-[62px] font-['Inter',sans-serif] text-[93px] leading-[60px] font-black whitespace-nowrap text-[#a3a39f]">WALKING DEAD</p>
      <div className="relative flex w-full">
        <button aria-label="Start" className="flex w-[50px] items-center justify-center">
          <svg className="h-[26px] w-[26px]" viewBox="0 0 26 26" fill="#fff"><path d="M0 4l11-1.700V12.500H0zM12 2.100L26 0v12.500H12zM0 13.500h11v10.200L0 22zM12 13.500h14V26l-14-2.100z" /></svg>
        </button>
        <div className="ml-[2px] flex gap-1 py-[1px]">
          {APPS.map((app) => (
            <div key={app.label} className="flex w-[58px]">
              <button aria-label={app.label} className={`flex flex-1 items-center justify-center ${app.frame}`}>
                <svg className="h-[32px] w-[32px]" viewBox={app.label === 'Unity' ? '-1 -2 32 33' : '0 0 32 32'}>{app.art}</svg>
              </button>
              {app.stacked && <span className="w-[5px] border border-l-0 border-[#b9b8b4] bg-[#ffffff30]" />}
            </div>
          ))}
        </div>
        <Tray />
      </div>
    </footer>
  )
}

export default function App() {
  return (
    <div className="flex h-screen flex-col overflow-hidden bg-[#282828] font-['DejaVu_Sans',sans-serif]">
      <TitleBar />
      <MenuBar />
      <ToolBar />
      <main className="grid min-h-0 flex-1 grid-cols-[1458fr_460fr] gap-[2px]">
        <div className="flex min-w-0 flex-col gap-1">
          <div className="flex min-h-0 flex-1 gap-[3px]">
            <HierarchyPanel />
            <GamePanel />
          </div>
          <div className="flex h-[267px] shrink-0 gap-[3px]">
            <ConsolePanel />
            <ProjectPanel />
          </div>
        </div>
        <div className="flex min-w-0 flex-col gap-[3px]">
          <InspectorPanel />
          <AnimationPanel />
        </div>
      </main>
      <div className="h-[22px] shrink-0 border-t border-[#1c1c1c]" />
      <Taskbar />
    </div>
  )
}
